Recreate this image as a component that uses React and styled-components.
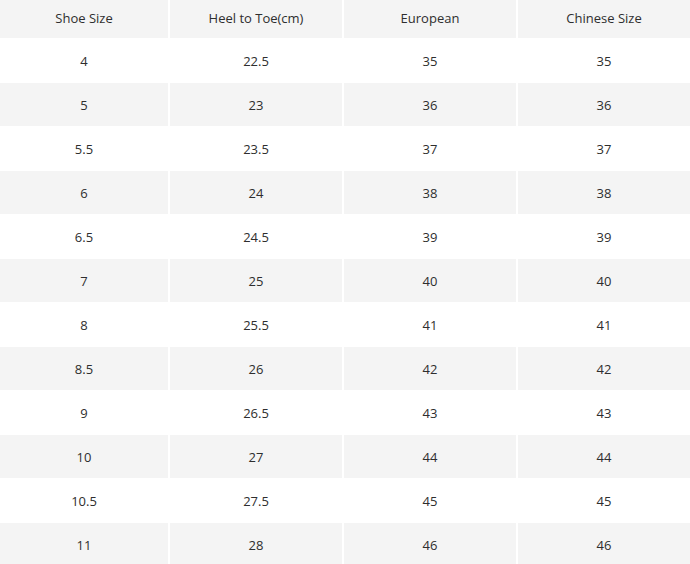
import React from "react";
import styled, { createGlobalStyle } from "styled-components";

const GlobalStyle = createGlobalStyle`
  html, body {
    margin: 0;
    padding: 0;
    background: #ffffff;
  }
  body {
    font-family: "Open Sans", "Liberation Sans", Arial, sans-serif;
  }
`;

const rows = [
  ["4", "22.5", "35", "35"],
  ["5", "23", "36", "36"],
  ["5.5", "23.5", "37", "37"],
  ["6", "24", "38", "38"],
  ["6.5", "24.5", "39", "39"],
  ["7", "25", "40", "40"],
  ["8", "25.5", "41", "41"],
  ["8.5", "26", "42", "42"],
  ["9", "26.5", "43", "43"],
  ["10", "27", "44", "44"],
  ["10.5", "27.5", "45", "45"],
  ["11", "28", "46", "46"],
];

const headers = ["Shoe Size", "Heel to Toe(cm)", "European", "Chinese Size"];

const Table = styled.div`
  width: 690px;
  display: flex;
  flex-direction: column;
  background: #fff;
`;

const Row = styled.div`
  display: grid;
  grid-template-columns: 168px 172px 172px 1fr;
  column-gap: 2px;
  height: ${p => p.height}px;
`;

const Cell = styled.div`
  display: flex;
  align-items: center;
  justify-content: center;
  padding-bottom: ${p => (p.head ? 3 : 0)}px;
  box-sizing: border-box;
  font-size: 13px;
  color: #2e2e2e;
  background: ${p => (p.shaded ? "#f4f4f4" : "#ffffff")};
`;

export default function App() {
  return (
    <>
      <GlobalStyle />
      <Table>
        <Row height={38}>
          {headers.map(h => (
            <Cell key={h} shaded head>{h}</Cell>
          ))}
        </Row>
        {rows.map((r, i) => {
          const shaded = i % 2 === 1;
          return (
            <Row key={i} height={shaded ? 43 : 45}>
              {r.map((v, j) => (
                <Cell key={j} shaded={shaded}>{v}</Cell>
              ))}
            </Row>
          );
        })}
      </Table>
    </>
  );
}
